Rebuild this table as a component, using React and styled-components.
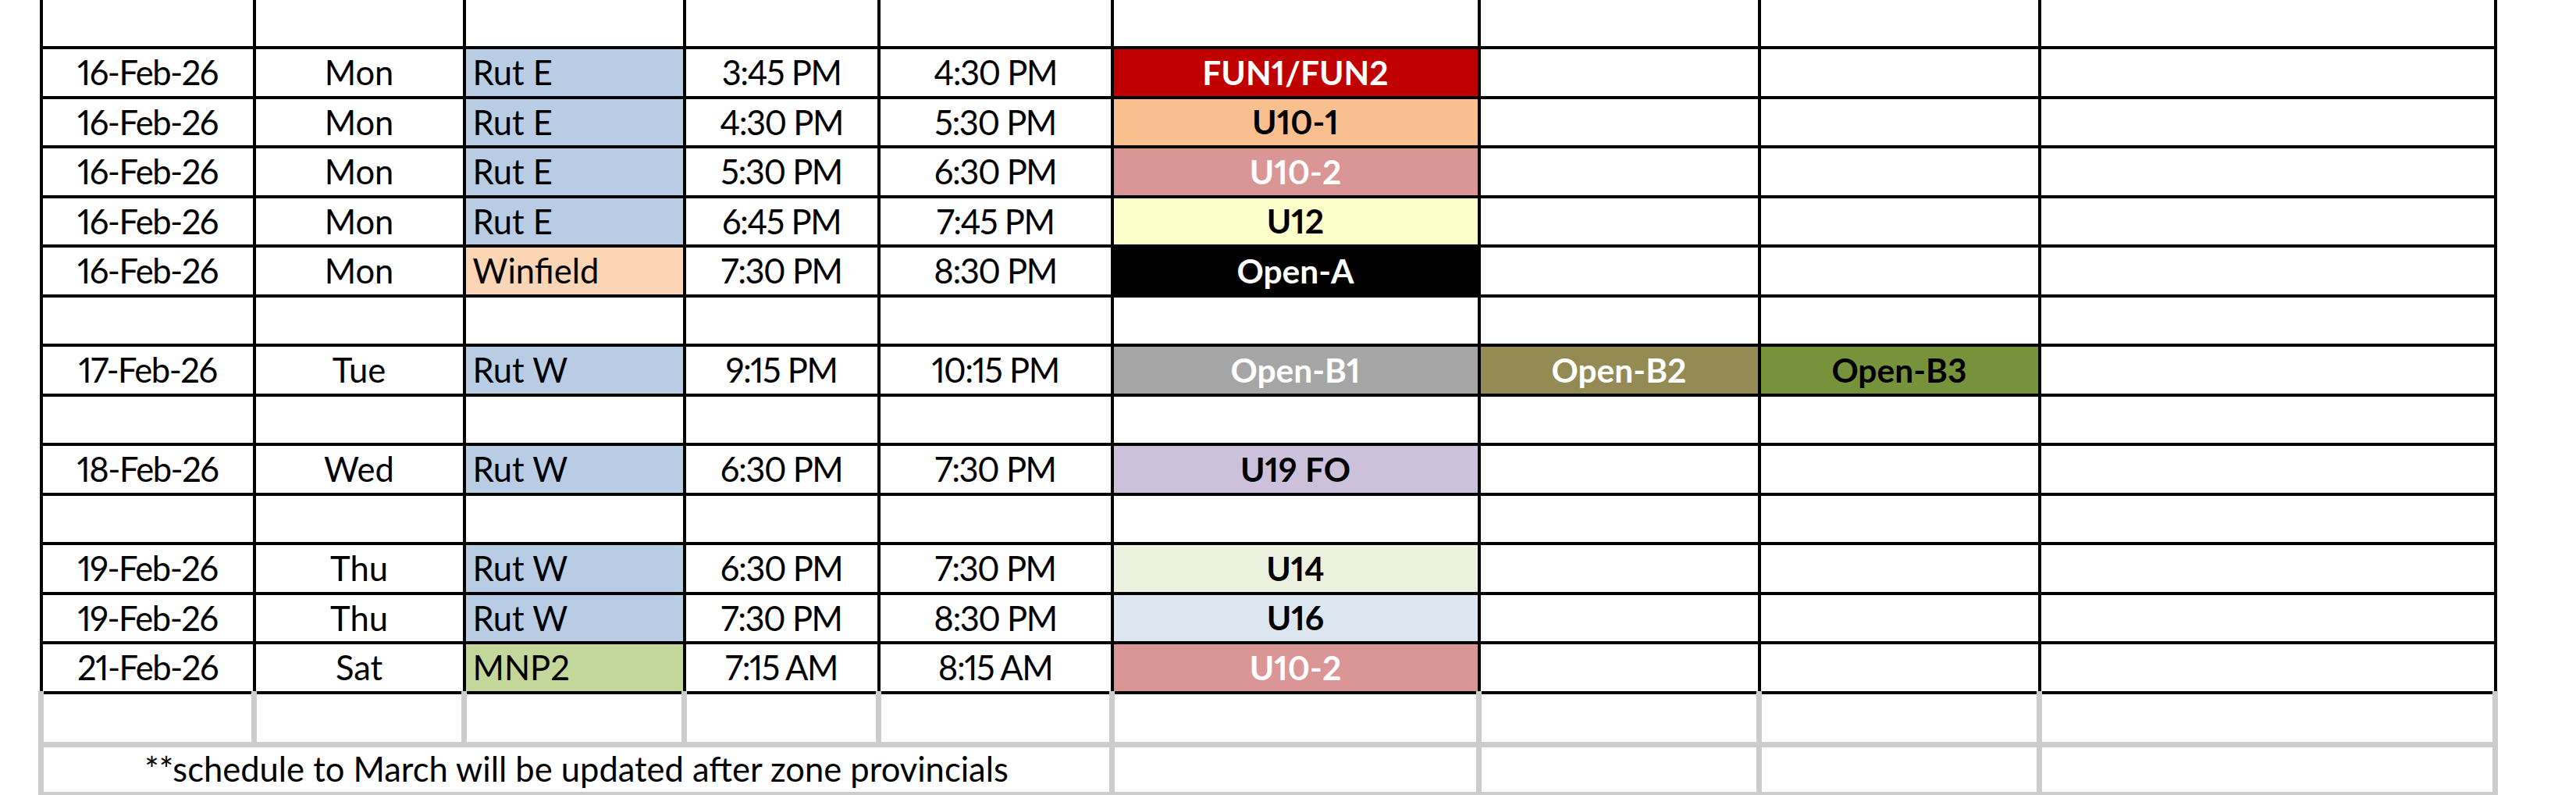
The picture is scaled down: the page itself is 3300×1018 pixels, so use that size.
import React from 'react'
import styled, { createGlobalStyle } from 'styled-components'

const GlobalStyle = createGlobalStyle`
    html, body {
        margin: 0;
        padding: 0;
        background: #fff;
    }
    body {
        font-family: Lato, "Liberation Sans", sans-serif;
        font-variant-numeric: proportional-nums;
    }
`;

const colWidths = [273, 269, 282, 249, 299, 470, 359, 359, 584]

const fills = {
    rut: '#B8CCE4',
    winfield: '#FCD5B4',
    mnp: '#C4D79B',
}

const teams = {
    'FUN1/FUN2': { fill: '#C00000', ink: '#fff' },
    'U10-1': { fill: '#FABF8F', ink: '#000' },
    'U10-2': { fill: '#DA9694', ink: '#fff' },
    'U12': { fill: '#FFFFCC', ink: '#000' },
    'Open-A': { fill: '#000', ink: '#fff' },
    'Open-B1': { fill: '#A6A6A6', ink: '#fff' },
    'Open-B2': { fill: '#948A54', ink: '#fff' },
    'Open-B3': { fill: '#76933C', ink: '#000' },
    'U19 FO': { fill: '#CCC0DA', ink: '#000' },
    'U14': { fill: '#EBF1DE', ink: '#000' },
    'U16': { fill: '#DCE6F1', ink: '#000' },
}

// null = blank spacer row
const schedule = [
    ['16-Feb-26', 'Mon', 'Rut E', 'rut', '3:45 PM', '4:30 PM', ['FUN1/FUN2']],
    ['16-Feb-26', 'Mon', 'Rut E', 'rut', '4:30 PM', '5:30 PM', ['U10-1']],
    ['16-Feb-26', 'Mon', 'Rut E', 'rut', '5:30 PM', '6:30 PM', ['U10-2']],
    ['16-Feb-26', 'Mon', 'Rut E', 'rut', '6:45 PM', '7:45 PM', ['U12']],
    ['16-Feb-26', 'Mon', 'Winfield', 'winfield', '7:30 PM', '8:30 PM', ['Open-A']],
    null,
    ['17-Feb-26', 'Tue', 'Rut W', 'rut', '9:15 PM', '10:15 PM', ['Open-B1', 'Open-B2', 'Open-B3']],
    null,
    ['18-Feb-26', 'Wed', 'Rut W', 'rut', '6:30 PM', '7:30 PM', ['U19 FO']],
    null,
    ['19-Feb-26', 'Thu', 'Rut W', 'rut', '6:30 PM', '7:30 PM', ['U14']],
    ['19-Feb-26', 'Thu', 'Rut W', 'rut', '7:30 PM', '8:30 PM', ['U16']],
    ['21-Feb-26', 'Sat', 'MNP2', 'mnp', '7:15 AM', '8:15 AM', ['U10-2']],
]

function App() {
    return (
        <SheetStyled>
            <GlobalStyle />
            <Grid>
                <colgroup>
                    {colWidths.map((w, i) => <Col key={i} $w={w} />)}
                </colgroup>
                <tbody>
                    <Row $h={61}>
                        {colWidths.map((_, i) => <Cell key={i} $noTop />)}
                    </Row>
                    {schedule.map((r, idx) => {
                        if (!r) {
                            return (
                                <Row key={idx} $h={idx % 2 ? 63 : 64}>
                                    {colWidths.map((_, i) => <Cell key={i} />)}
                                </Row>
                            )
                        }
                        const [date, day, place, kind, start, end, groups] = r
                        return (
                            <Row key={idx} $h={idx % 2 ? 63 : 64}>
                                <Cell $num>{date}</Cell>
                                <Cell>{day}</Cell>
                                <Cell $align="left" $fill={fills[kind]}>{place}</Cell>
                                <Cell $num>{start}</Cell>
                                <Cell $num>{end}</Cell>
                                {[0, 1, 2].map((g) => {
                                    const name = groups[g]
                                    if (!name) return <Cell key={g} />
                                    return (
                                        <Cell key={g} $bold $fill={teams[name].fill} $ink={teams[name].ink}>
                                            {name}
                                        </Cell>
                                    )
                                })}
                                <Cell />
                            </Row>
                        )
                    })}
                    <Row $h={66}>
                        {colWidths.map((_, i) => <GreyCell key={i} $noTop />)}
                    </Row>
                    <Row $h={64}>
                        <GreyCell colSpan={5}>**schedule to March will be updated after zone provincials</GreyCell>
                        <GreyCell />
                        <GreyCell />
                        <GreyCell />
                        <GreyCell />
                    </Row>
                </tbody>
            </Grid>
        </SheetStyled>
    )
}

const SheetStyled = styled.div`
    padding-left: 49px;
    overflow: hidden;
    height: 1018px;
`;

const Grid = styled.table`
    border-collapse: collapse;
    table-layout: fixed;
    width: 3144px;
`;

const Col = styled.col`
    width: ${(p) => p.$w}px;
`;

const Row = styled.tr`
    height: ${(p) => p.$h}px;
`;

const Cell = styled.td`
    border: 4px solid #000;
    ${(p) => p.$noTop && 'border-top: none;'}
    padding: 0 9px;
    font-size: ${(p) => (p.$bold ? 42.5 : 43.5)}px;
    letter-spacing: ${(p) => (p.$num ? '-1.5px' : 'normal')};
    line-height: 1;
    text-align: ${(p) => p.$align || 'center'};
    vertical-align: middle;
    background: ${(p) => p.$fill || '#fff'};
    color: ${(p) => p.$ink || '#000'};
    font-weight: ${(p) => (p.$bold ? 700 : 400)};
    white-space: nowrap;
    overflow: hidden;
`;

const GreyCell = styled(Cell)`
    border: 7px solid #CCCCCC;
    ${(p) => p.$noTop && 'border-top: none;'}
`;

export default App
